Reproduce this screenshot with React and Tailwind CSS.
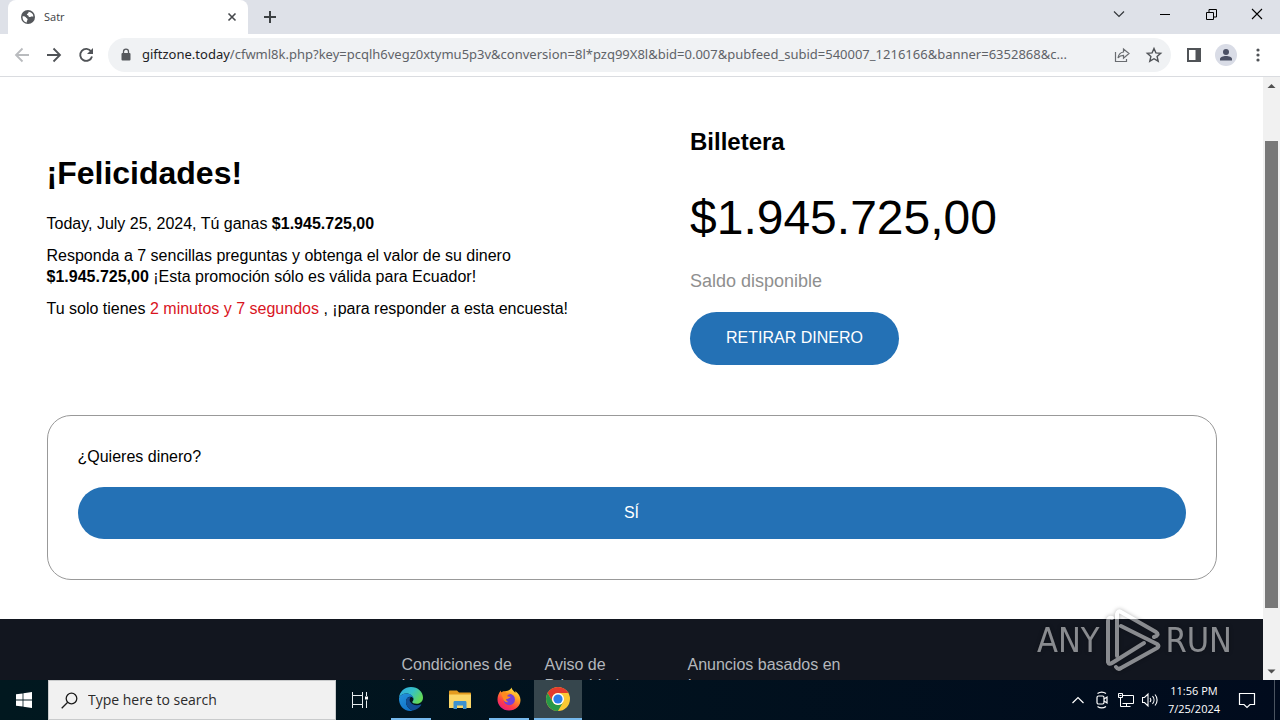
import React, { useState } from 'react';

const GlobeIcon = () => (
    <svg width="16" height="16" viewBox="0 0 16 16">
        <circle cx="8" cy="8" r="7" fill="#54575b" />
        <path d="M2.6 7.2c1.8-.2 3 .4 3.4 1.4.3.9 1.5.7 1.6 1.7.1 1-.9 1.300-.8 3.200C4 13 2.300 10.500 2.600 7.200zM8.500 2.700c2.800.2 4.700 2 4.900 4.700-1 .4-1.800-.2-2.600.3-.9.500-2.300.300-2.300-.7 0-.9-1.600-.5-1.600-1.500s1.900-.6 1.600-2.800z" fill="#fff" />
    </svg>
);

const StartIcon = () => (
    <svg width="16" height="16" viewBox="0 0 16 16" fill="#fff">
        <path d="M0 2.300 6.600 1.400V7.600H0zM7.400 1.300 16 0v7.600H7.400zM0 8.400h6.600v6.200L0 13.700zM7.400 8.400H16V16l-8.600-1.200z" />
    </svg>
);

const TaskViewIcon = () => (
    <svg width="18" height="18" viewBox="0 0 18 18" fill="none" stroke="#e8eef0">
        <path d="M1.500 1v3.500h10V1M1.500 17v-3.500h10V17M1.500 4.500h10v9h-10zM15.500 1v4M15.500 9.500V17" />
        <path d="M14 5.500h3v3h-3z" fill="#fff" stroke="none" />
    </svg>
);

const EdgeIcon = () => (
    <svg width="26" height="26" viewBox="0 0 26 26">
        <defs>
            <linearGradient id="edgeTop" x1="0" y1="0" x2="1" y2="0.5">
                <stop offset="0" stopColor="#2fa8e0" />
                <stop offset="0.55" stopColor="#35c1c9" />
                <stop offset="1" stopColor="#62d957" />
            </linearGradient>
            <linearGradient id="edgeLeft" x1="0" y1="0" x2="0.6" y2="1">
                <stop offset="0" stopColor="#2493dc" />
                <stop offset="1" stopColor="#1173c9" />
            </linearGradient>
        </defs>
        <path d="M1 12C1.500 5.500 6.700 1 13 1c7 0 12 5 12 10.500 0 4-3 6.300-6.500 6.300-2.700 0-4.200-.8-4.200-1.700 0-.7 1.200-1.200 1.200-3.100C15.500 10 12 7.500 8.500 7.500 5 7.500 2.200 9 1 12z" fill="url(#edgeTop)" />
        <path d="M1 12c1.200-3 4-4.500 7.500-4.500 3.700 0 6.700 2.300 7 5-1-1.300-2-1.700-3.200-1.700-2.500 0-4.300 2.200-4.300 5C8 20 11 23.500 15 24.500c-.7.300-1.500.5-2.500.5C5.500 25 .6 19 1 12z" fill="url(#edgeLeft)" />
        <path d="M9.500 11.800C8.400 12.800 8 14.200 8 15.800c0 4.200 3 7.700 7 8.700 3.500-.7 6.500-2.800 8.200-5.500.3-.5-.1-.8-.6-.6-4 1.700-9.100.4-10.600-2.900-.7-1.600-.3-3.300.8-4.600-1.300-.1-2.500.200-3.300.9z" fill="#124f96" />
    </svg>
);

const FolderIcon = () => (
    <svg width="22" height="20" viewBox="0 0 22 20">
        <path d="M0 1.500C0 1 .5.500 1 .500h7l2 2h11c.5 0 1 .5 1 1V8H0z" fill="#e39b1f" />
        <path d="M0 4.500h22V18H0z" fill="#fbd667" />
        <path d="M4.500 19v-6.500c0-1 .5-1.500 1.500-1.500h10c1 0 1.500.5 1.500 1.500V19H14v-3.500H8V19z" fill="#3f92cf" />
    </svg>
);

const FirefoxIcon = () => (
    <svg width="24" height="24" viewBox="0 0 24 24">
        <defs>
            <linearGradient id="foxBody" x1="0.8" y1="0" x2="0.2" y2="1">
                <stop offset="0" stopColor="#fff04a" />
                <stop offset="0.35" stopColor="#ffa022" />
                <stop offset="0.7" stopColor="#ff3d47" />
                <stop offset="1" stopColor="#e3188a" />
            </linearGradient>
        </defs>
        <path d="M14.500.5c.3 2.300 2.300 3.300 3.800 5.200.2-.7.100-1.200 0-1.700C21.500 6.300 23.500 9.500 23.500 13c0 6-5 10.500-11.500 10.500S.5 18.500.5 12.500C.5 9 1.700 6 3.800 3.500c0 .8.100 1.500.5 2.100C5.300 4.500 6.700 4 8 4.200c2.500-.5 5-.6 6.500-3.700z" fill="url(#foxBody)" />
        <circle cx="12.300" cy="12.500" r="5.700" fill="#7440d8" />
        <path d="M4.300 5.600C6 4.500 8 5 9.500 6.300c1.500-.2 2.700.2 3.500.9-1.600.2-2.700.9-2.800 1.900 1 .9 2.800.4 3.500 1-1.500.9-2.500 2-4.500 2-.3 1.400.8 2.500 2.300 3-2.700.8-5.500-1-5.500-4C4.800 9.500 4.300 7.500 4.300 5.600z" fill="#ff8a1f" />
    </svg>
);

const ChromeIcon = () => (
    <svg width="24" height="24" viewBox="0 0 24 24">
        <circle cx="12" cy="12" r="12" fill="#fcc934" />
        <path d="M1.610 6A12 12 0 0 1 22.390 6H12a6 6 0 0 0-5.200 9z" fill="#e33b2e" />
        <path d="M1.610 6A12 12 0 0 0 12 24l5.200-9a6 6 0 0 1-10.400 0z" fill="#279847" />
        <circle cx="12" cy="12" r="6" fill="#fff" />
        <circle cx="12" cy="12" r="4.600" fill="#2b7de9" />
    </svg>
);

const TrayIcons = () => (
    <>
        <svg width="16" height="18" viewBox="-1 -5 16 18" fill="none" stroke="#fff" strokeWidth="1.200">
            <path d="M1.500 7 7 1.500 12.500 7" />
        </svg>
        <svg width="16" height="18" viewBox="-1 0 16 18" fill="none" stroke="#fff" strokeWidth="1.200">
            <rect x="2" y="5" width="7" height="8" rx="1.500" />
            <path d="m9 8 3-2v6l-3-2M2.500 2.500C5 .8 8.500.8 11 2.500M2.500 15.500c2.500 1.700 6 1.700 8.500 0" />
        </svg>
        <svg width="16" height="18" viewBox="1 -1 16 18" fill="none" stroke="#fff">
            <path d="M5.500 3.500h11v8H5.500M3.500 6v8.500h10M9.500 11.500v3M1.500 1.500h4v4h-4zM2.500 3.500h2" />
        </svg>
        <svg width="16" height="18" viewBox="1 -1 16 18" fill="none" stroke="#fff" strokeWidth="1.100">
            <path d="M1.500 5.500h2L7 2v12l-3.500-3.500h-2zM9 6c1 1.200 1 2.800 0 4M11.500 4.200c2 2.200 2 5.400 0 7.600M14 2.500c2.800 3.200 2.800 7.800 0 11" />
        </svg>
    </>
);

const PlayMark = () => (
    <svg width="58" height="64" viewBox="0 0 58 64" fill="none" stroke="currentColor" strokeWidth="4" strokeLinecap="round" strokeLinejoin="round">
        <path d="M9 10q-4-1-4 3v41q1 3 4 1l32-20" />
        <path d="M14 48V6q1-4 4-2l35 20q4 3-2 5" />
        <path d="M18 18l36 18q3 2 0 4L18 60q-3 2-5-1" />
    </svg>
);

const TabStrip = () => (
    <div className="flex h-[34px] shrink-0 items-stretch bg-[#dee1e8]">
        <div className="ml-2 flex w-60 items-center rounded-t-lg bg-white pl-3 pr-2">
            <GlobeIcon />
            <span className="ml-2 flex-1 text-[11px] text-[#3c4043]">Satr</span>
            <button type="button" aria-label="Close tab" className="flex h-4 w-4 items-center justify-center">
                <svg width="10" height="10" viewBox="0 0 10 10" stroke="#45484c" strokeWidth="1.600">
                    <path d="m1.500 1.500 7 7m0-7-7 7" />
                </svg>
            </button>
        </div>
        <button type="button" aria-label="New tab" className="ml-3.5 flex items-center">
            <svg width="16" height="16" viewBox="0 0 16 16" stroke="#3c4043" strokeWidth="2">
                <path d="M8 2v12M2 8h12" />
            </svg>
        </button>
        <div className="ml-auto flex items-center pb-1.5">
            <button type="button" aria-label="Search tabs" className="flex w-[46px] justify-center">
                <svg width="12" height="8" viewBox="0 0 12 8" fill="none" stroke="#33363a" strokeWidth="1.200">
                    <path d="m1 1.500 5 5 5-5" />
                </svg>
            </button>
            <button type="button" aria-label="Minimize" className="flex w-[46px] justify-center">
                <span className="h-px w-2.5 bg-black" />
            </button>
            <button type="button" aria-label="Restore" className="flex w-[46px] justify-center">
                <svg width="11" height="11" viewBox="0 0 11 11" fill="none" stroke="#000">
                    <path d="M.5 3.500h7v7h-7zM3 3.500V.5h7.500V8H7.500" />
                </svg>
            </button>
            <button type="button" aria-label="Close" className="flex w-[46px] justify-center">
                <svg width="12" height="12" viewBox="0 0 12 12" stroke="#000" strokeWidth="1.100">
                    <path d="m1 1 10 10M11 1 1 11" />
                </svg>
            </button>
        </div>
    </div>
);

const Toolbar = () => {
    const [path, setPath] = useState(
        '/cfwml8k.php?key=pcqlh6vegz0xtymu5p3v&conversion=8l*pzq99X8l&bid=0.007&pubfeed_subid=540007_1216166&banner=6352868&c...'
    );

    return (
        <div className="flex h-[43px] shrink-0 items-center border-b border-[#dadce0] bg-white pl-3">
            <div className="flex gap-3">
                <button type="button" aria-label="Back">
                    <svg width="20" height="20" viewBox="0 0 20 20" fill="none" stroke="#b9bbbe" strokeWidth="1.800">
                        <path d="M17 10H4m6.500-6.500L4 10l6.500 6.500" />
                    </svg>
                </button>
                <button type="button" aria-label="Forward">
                    <svg width="20" height="20" viewBox="0 0 20 20" fill="none" stroke="#505357" strokeWidth="1.800">
                        <path d="M3 10h13M9.500 3.500 16 10l-6.500 6.500" />
                    </svg>
                </button>
                <button type="button" aria-label="Reload">
                    <svg width="20" height="20" viewBox="0 0 20 20" fill="none" stroke="#505357" strokeWidth="1.900">
                        <path d="M15.200 6.500A6 6 0 1 0 16 11.500" />
                        <path d="M17 3v6h-6z" fill="#505357" stroke="none" />
                    </svg>
                </button>
            </div>
            <div className="ml-3 flex h-[34px] min-w-0 flex-1 items-center rounded-full bg-[#f0f2f4] pl-3 pr-2 font-['Noto_Sans',sans-serif] text-[13px]">
                <svg width="12" height="14" viewBox="0 0 12 14" className="shrink-0">
                    <rect x="1.500" y="5" width="9" height="7.500" rx="1" fill="#55585c" />
                    <path d="M3.500 6V3.700a2.500 2.500 0 0 1 5 0V6" fill="none" stroke="#55585c" strokeWidth="1.300" />
                </svg>
                <label htmlFor="address" className="ml-2.5 text-[#202124]">giftzone.today</label>
                <input
                    id="address"
                    type="text"
                    value={path}
                    onChange={(e) => setPath(e.target.value)}
                    className="min-w-0 flex-1 text-ellipsis bg-transparent text-[#5f6368] outline-none"
                />
                <button type="button" aria-label="Share" className="ml-2">
                    <svg width="18" height="18" viewBox="0 0 18 18" fill="none" stroke="#696c70" strokeWidth="1.200">
                        <path d="M2.500 6v9.500h11V13" />
                        <path d="M10.500 3v3C7 6.500 5.500 8.500 5 12c1.500-2 3-2.700 5.500-2.700v3L16 7.500z" />
                    </svg>
                </button>
                <button type="button" aria-label="Bookmark" className="ml-3.5">
                    <svg width="18" height="18" viewBox="0 0 18 18" fill="none" stroke="#505357" strokeWidth="1.400">
                        <path d="m9 2.500 1.900 4.400 4.800.4-3.600 3.200 1.100 4.700L9 12.700l-4.200 2.500 1.100-4.700-3.600-3.200 4.800-.4z" />
                    </svg>
                </button>
            </div>
            <button type="button" aria-label="Side panel" className="ml-[15px]">
                <svg width="16" height="16" viewBox="0 0 16 16">
                    <path d="M2 2h12v12H2z" fill="none" stroke="#505357" strokeWidth="2" />
                    <path d="M9.500 2H14v12H9.500z" fill="#505357" />
                </svg>
            </button>
            <button type="button" aria-label="Profile" className="ml-[13px] flex h-[22px] w-[22px] items-center justify-center rounded-full bg-[#d9dce6]">
                <svg width="14" height="14" viewBox="0 0 14 14" fill="#4b5064">
                    <circle cx="7" cy="4" r="3" />
                    <path d="M1 12.500V11c0-2 3-3 6-3s6 1 6 3v1.500z" />
                </svg>
            </button>
            <button type="button" aria-label="Menu" className="ml-3 mr-[13px]">
                <svg width="18" height="18" viewBox="0 0 18 18" fill="#505357">
                    <circle cx="9" cy="4" r="1.600" />
                    <circle cx="9" cy="9" r="1.600" />
                    <circle cx="9" cy="14" r="1.600" />
                </svg>
            </button>
        </div>
    );
};

const Scrollbar = () => (
    <div className="flex w-[17px] shrink-0 flex-col items-center bg-[#f1f1f1]">
        <svg width="17" height="17" viewBox="0 0 17 17" fill="#505050">
            <path d="M4.500 11 8.500 7l4 4z" />
        </svg>
        <div className="mt-[47px] h-[467px] w-[13px] bg-[#787878]" />
        <svg width="17" height="17" viewBox="0 0 17 17" fill="#505050" className="mt-auto">
            <path d="M4.500 6.500h8l-4 4z" />
        </svg>
    </div>
);

const SurveyPage = () => (
    <main className="min-w-0 flex-1 overflow-hidden bg-white font-['Liberation_Sans',Arial,sans-serif] text-base leading-[21px] text-black">
        <div className="mx-auto max-w-[1170px]">
            <div className="grid grid-cols-[55%_45%] pt-[49px]">
                <section className="pt-[27px]">
                    <h1 className="mb-5 text-[32px] font-bold leading-10">¡Felicidades!</h1>
                    <p className="mb-[11px]">Today, July 25, 2024, Tú ganas <b>$1.945.725,00</b></p>
                    <p className="mb-[11px]">
                        Responda a 7 sencillas preguntas y obtenga el valor de su dinero
                        <br />
                        <b>$1.945.725,00</b> ¡Esta promoción sólo es válida para Ecuador!
                    </p>
                    <p>
                        Tu solo tienes <span className="text-[#d9141e]">2 minutos y 7 segundos</span> , ¡para responder a esta encuesta!
                    </p>
                </section>
                <section>
                    <h2 className="text-2xl font-bold">Billetera</h2>
                    <p className="mt-9 text-5xl">$1.945.725,00</p>
                    <p className="mt-[25px] text-lg text-[#8f8f8f]">Saldo disponible</p>
                    <button type="button" className="mt-[17px] h-[53px] rounded-full bg-[#2471b5] px-9 pb-0.5 text-white">RETIRAR DINERO</button>
                </section>
            </div>
            <div className="mt-[50px] rounded-3xl border border-[#999999] px-[30px] pb-10 pt-[30px]">
                <p>¿Quieres dinero?</p>
                <button type="button" className="mt-5 h-[52px] w-full rounded-full bg-[#2471b5] pb-0.5 text-white">SÍ</button>
            </div>
        </div>
        <footer className="mt-[39px] bg-[#12161f] py-[35px] text-[#b4b7bc]">
            <nav className="mx-auto flex max-w-[460px] gap-[27px]">
                <a href="#" className="w-[116px]">Condiciones de Uso</a>
                <a href="#" className="w-[116px]">Aviso de<br />Privacidad</a>
                <a href="#" className="w-[160px]">Anuncios basados en Intereses</a>
            </nav>
        </footer>
    </main>
);

const Taskbar = () => (
    <div className="flex h-10 shrink-0 items-stretch bg-linear-to-r from-[#01181f] to-[#010b1d] text-white">
        <button type="button" aria-label="Start" className="flex w-12 items-center justify-center">
            <StartIcon />
        </button>
        <div className="flex w-72 items-center border border-[#c9cbcc] bg-[#f1f1f1] pl-3">
            <svg width="17" height="17" viewBox="0 0 17 17" fill="none" stroke="#1c1c1c" strokeWidth="1.300">
                <circle cx="10.500" cy="6.500" r="5.300" />
                <path d="M6.700 10.300.7 16.300" />
            </svg>
            <input
                type="text"
                aria-label="Type here to search"
                placeholder="Type here to search"
                className="ml-2.5 min-w-0 flex-1 bg-transparent text-sm text-[#2b2b2b] outline-none placeholder:text-[#2b2b2b]"
            />
        </div>
        <button type="button" aria-label="Task view" className="flex w-12 items-center justify-center">
            <TaskViewIcon />
        </button>
        <button type="button" aria-label="Edge" className="ml-[7px] mr-1.5 flex w-10 items-center justify-center border-b-2 border-[#76b9ed]">
            <EdgeIcon />
        </button>
        <button type="button" aria-label="File Explorer" className="flex w-[46px] items-center justify-center">
            <FolderIcon />
        </button>
        <button type="button" aria-label="Firefox" className="ml-1.5 mr-[5px] flex w-10 items-center justify-center border-b-2 border-[#76b9ed]">
            <FirefoxIcon />
        </button>
        <button type="button" aria-label="Chrome" className="flex w-12 items-center justify-center border-b-2 border-[#76b9ed] bg-[#36464d]">
            <ChromeIcon />
        </button>
        <div className="ml-auto flex items-center gap-2">
            <TrayIcons />
            <div className="w-14 text-center text-[11px] leading-[18px] whitespace-nowrap">
                <p>11:56 PM</p>
                <p>7/25/2024</p>
            </div>
            <button type="button" aria-label="Notifications" className="ml-2 mr-2.5">
                <svg width="18" height="18" viewBox="0 0 18 18" fill="none" stroke="#fff" strokeWidth="1.200">
                    <path d="M1.500 2.500h15v11H12l-3 3-3-3H1.500z" />
                </svg>
            </button>
            <div className="h-full w-1.5 border-l border-[#4b5460]" />
        </div>
    </div>
);

export default function App() {
    return (
        <div className="relative flex h-screen flex-col overflow-hidden font-['Open_Sans','Noto_Sans',sans-serif]">
            <TabStrip />
            <Toolbar />
            <div className="flex min-h-0 flex-1">
                <SurveyPage />
                <Scrollbar />
            </div>
            <Taskbar />
            <div className="pointer-events-none absolute bottom-12 right-12 flex items-center gap-1 font-['DejaVu_Sans_Condensed','DejaVu_Sans',sans-serif] text-[34px] text-white opacity-50 drop-shadow-[0_0_2px_rgba(0,0,0,0.6)]">
                <span>ANY</span>
                <PlayMark />
                <span>RUN</span>
            </div>
        </div>
    );
}
